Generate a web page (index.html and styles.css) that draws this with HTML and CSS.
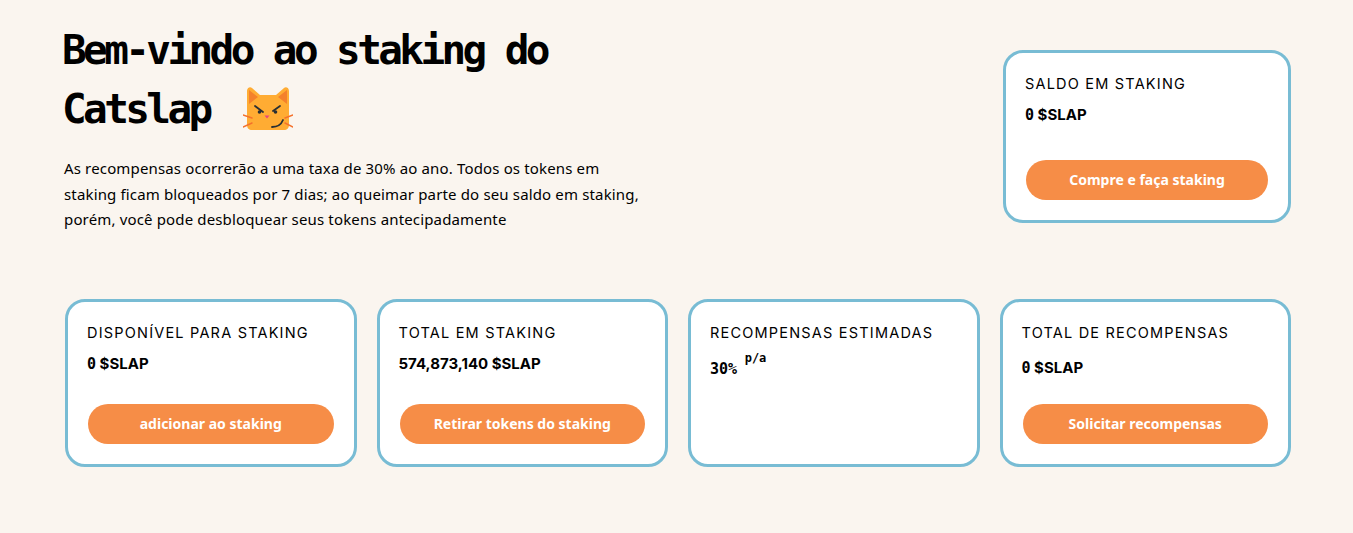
FILE: index.html
```html
<!DOCTYPE html>
<html>

	<head>
		<meta charset='utf-8' />
		<title>Catslap staking</title>
		<link rel="stylesheet" href="styles.css">
	</head>

	<body>
		<div class='page'>
			<div class='hero'>
				<div class='intro'>
					<h1>Bem-vindo ao staking do<br/>Catslap<svg class='cat' viewBox="0 0 50 44" aria-hidden="true">
							<path d="M4 5c0-3 3-5 5-3l8 7h16l8-7c2-2 5 0 5 3v34c0 3-2 5-5 5H9c-3 0-5-2-5-5z" fill="#ffac33"/>
							<path d="M6 4v14l9-7zM44 4v14l-9-7z" fill="#f4812c"/>
							<path d="M12 20l8 6M37 20l-7 5" stroke="#292f33" stroke-width="1.800" stroke-linecap="round"/>
							<circle cx="16.500" cy="26" r="1.800" fill="#292f33"/>
							<circle cx="32.500" cy="26" r="1.800" fill="#292f33"/>
							<path d="M21.500 29.500h5l-2.500 3z" fill="#e8457c"/>
							<path d="M29 41c5 0 9-2 11-7" fill="none" stroke="#292f33" stroke-width="1.800" stroke-linecap="round"/>
							<path d="M0 29l9 3M0 41l9-4M50 29l-8 3M50 41l-8-4" stroke="#f4712c" stroke-width="1.500" stroke-linecap="round"/>
						</svg>
					</h1>
					<p>As recompensas ocorrerão a uma taxa de 30% ao ano. Todos os tokens em staking ficam bloqueados por 7 dias; ao queimar parte do seu saldo em staking, porém, você pode desbloquear seus tokens antecipadamente</p>
				</div>
				<div class='card card-balance'>
					<div class='label'>Saldo em staking</div>
					<div class='value'><span class='mono'>0</span> $SLAP</div>
					<a class='btn' href='#'>Compre e faça staking</a>
				</div>
			</div>
			<div class='cards'>
				<div class='card'>
					<div class='label'>Disponível para staking</div>
					<div class='value'><span class='mono'>0</span> $SLAP</div>
					<a class='btn' href='#'>adicionar ao staking</a>
				</div>
				<div class='card'>
					<div class='label'>Total em staking</div>
					<div class='value'>574,873,140 $SLAP</div>
					<a class='btn' href='#'>Retirar tokens do staking</a>
				</div>
				<div class='card'>
					<div class='label'>Recompensas estimadas</div>
					<div class='value value-low'><span class='mono'>30%</span> <sup>p/a</sup></div>
				</div>
				<div class='card'>
					<div class='label'>Total de recompensas</div>
					<div class='value value-low'><span class='mono'>0</span> $SLAP</div>
					<a class='btn' href='#'>Solicitar recompensas</a>
				</div>
			</div>
		</div>
	</body>

</html>
```

FILE: styles.css
```css
body {
	margin: 0;
	background: #faf5ef;
	color: #000;
	font-family: "Inter", "DejaVu Sans", sans-serif;
}

.page {
	padding: 21px 62px 66px 64px;
}

.hero {
	display: flex;
	justify-content: space-between;
	align-items: flex-start;
}

.intro {
	width: 590px;
}

h1 {
	margin: 0 0 0 -2px;
	font-family: "DejaVu Sans Mono", monospace;
	font-size: 41px;
	line-height: 59px;
	letter-spacing: -3.600px;
	font-weight: 700;
}

.cat {
	width: 50px;
	height: 44px;
	margin-left: 33px;
	vertical-align: -7px;
}

.intro p {
	margin: 17px 0 0;
	font-family: "Noto Sans", sans-serif;
	font-size: 15px;
	line-height: 25.500px;
	letter-spacing: 0.150px;
}

.card {
	box-sizing: border-box;
	display: flex;
	flex-direction: column;
	height: 168px;
	padding: 21px 20px 20px 19px;
	background: #fff;
	border: 3px solid #78bcd4;
	border-radius: 20px;
}

.card-balance {
	width: 288px;
	height: 173px;
	margin-top: 29px;
}

.cards {
	display: grid;
	grid-template-columns: repeat(4, 1fr);
	gap: 20px;
	margin: 66.500px 0 0 1px;
}

.label {
	font-size: 14.500px;
	line-height: 20px;
	letter-spacing: 1.200px;
	text-transform: uppercase;
}

.value {
	margin-top: 11px;
	font-size: 15px;
	line-height: 20px;
	font-weight: 700;
}

.value-low {
	margin-top: 15px;
}

.mono {
	font-family: "DejaVu Sans Mono", monospace;
	font-size: 15px;
}

.value sup {
	font-family: "DejaVu Sans Mono", monospace;
	font-size: 12px;
	line-height: 0;
	margin-left: 4px;
	vertical-align: 12px;
}

.btn {
	display: block;
	margin: auto 0 0 1px;
	height: 40px;
	line-height: 40px;
	border-radius: 20px;
	background: #f68d47;
	color: #fff;
	font-family: "Noto Sans", sans-serif;
	font-size: 14px;
	font-weight: 700;
	text-align: center;
	text-decoration: none;
}
```
